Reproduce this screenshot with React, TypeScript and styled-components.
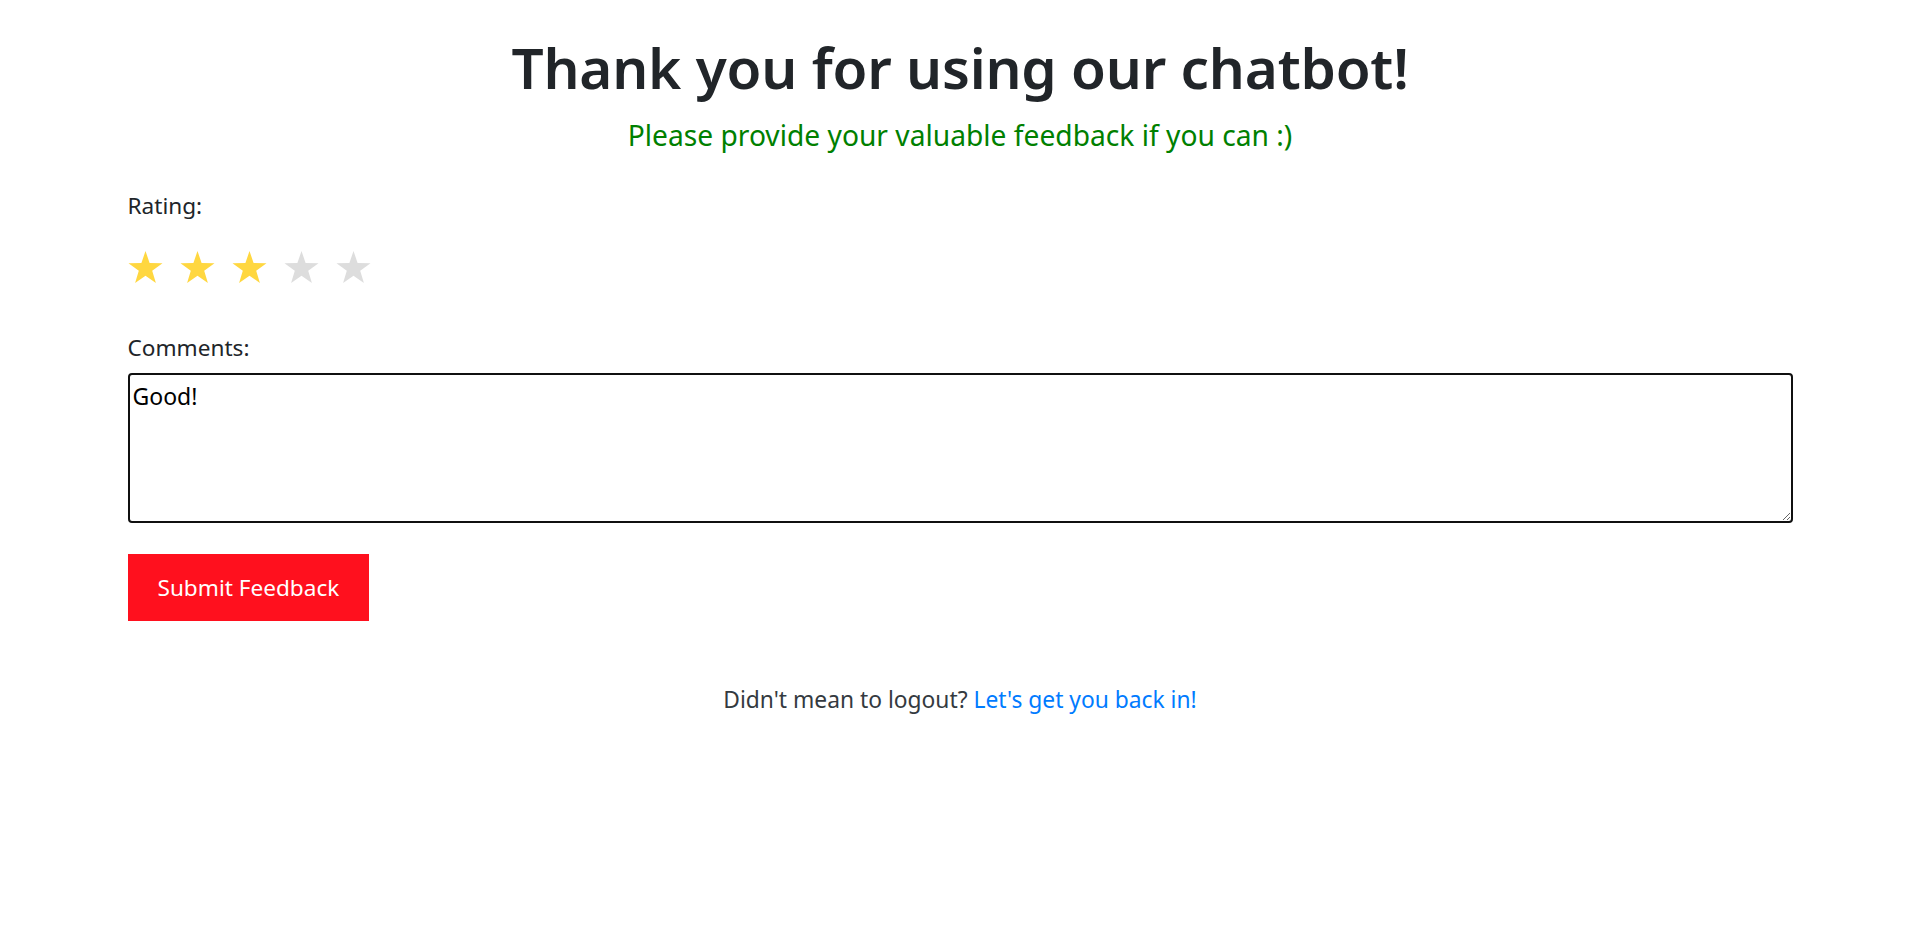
import React, { useEffect, useRef } from "react";
import styled, { createGlobalStyle } from "styled-components";

const GlobalStyle = createGlobalStyle`
  html, body {
    margin: 0;
    padding: 0;
    background: #ffffff;
  }
  body {
    font-family: "Noto Sans", "Open Sans", sans-serif;
    color: #212529;
  }
`;

const Page = styled.main`
  max-width: 1665px;
  margin: 0 auto;
  padding-top: 32px;
`;

const Header = styled.header`
  text-align: center;
`;

const Title = styled.h1`
  margin: 0;
  font-size: 56.6px;
  line-height: 70px;
  font-weight: 600;
  letter-spacing: -0.2px;
  color: #212529;
`;

const Subtitle = styled.p`
  margin: 14px 0 0;
  font-size: 28.2px;
  line-height: 38px;
  color: #008000;
`;

const Form = styled.form`
  display: flex;
  flex-direction: column;
  align-items: flex-start;
`;

const Label = styled.label<{ $top: number }>`
  display: block;
  margin-top: ${(p) => p.$top}px;
  font-size: 22.6px;
  line-height: 36px;
  color: #212529;
`;

const Stars = styled.div`
  display: flex;
  gap: 17px;
  margin-top: 27px;
  height: 32px;
`;

const StarButton = styled.span<{ $on: boolean }>`
  display: block;
  width: 35px;
  height: 32px;
  color: ${(p) => (p.$on ? "#ffd740" : "#dddddd")};
  cursor: pointer;
`;

const Comments = styled.textarea`
  box-sizing: border-box;
  width: 100%;
  height: 150px;
  margin-top: 7px;
  padding: 6px 3px;
  border: 2px solid #101010;
  border-radius: 4px;
  outline: none;
  font-family: "Noto Sans", "Open Sans", sans-serif;
  font-size: 23px;
  line-height: 30px;
  color: #000000;
  resize: both;
`;

const SubmitButton = styled.button`
  margin-top: 31px;
  height: 67px;
  padding: 0 30px;
  border: none;
  border-radius: 0;
  background: #ff101e;
  color: #ffffff;
  font-family: "Noto Sans", "Open Sans", sans-serif;
  font-size: 22.6px;
  cursor: pointer;
`;

const Footer = styled.p`
  margin: 61px 0 0;
  text-align: center;
  font-size: 22.8px;
  line-height: 36px;
  color: #343a40;
`;

const Link = styled.a`
  color: #007bff;
  text-decoration: none;
`;

const Star = () => (
  <svg width="35" height="32" viewBox="0 0 35 32" aria-hidden="true">
    <polygon
      fill="currentColor"
      points="17.5,0 21.6,12 34.5,12.2 24.2,19.8 27.9,32 17.5,24.7 7.1,32 10.8,19.8 0.5,12.2 13.4,12"
    />
  </svg>
);

export default function App() {
  const ref = useRef<HTMLTextAreaElement>(null);
  const rating = 3;

  useEffect(() => {
    const el = ref.current;
    if (el) {
      el.focus();
      el.setSelectionRange(el.value.length, el.value.length);
    }
  }, []);

  return (
    <>
      <GlobalStyle />
      <Page>
        <Header>
          <Title>Thank you for using our chatbot!</Title>
          <Subtitle>Please provide your valuable feedback if you can :)</Subtitle>
        </Header>
        <Form onSubmit={(e) => e.preventDefault()}>
          <Label $top={34}>Rating:</Label>
          <Stars>
            {[1, 2, 3, 4, 5].map((n) => (
              <StarButton key={n} $on={n <= rating}>
                <Star />
              </StarButton>
            ))}
          </Stars>
          <Label $top={47} htmlFor="comments">
            Comments:
          </Label>
          <Comments id="comments" ref={ref} defaultValue="Good!" />
          <SubmitButton type="submit">Submit Feedback</SubmitButton>
        </Form>
        <Footer>
          Didn't mean to logout? <Link href="#">Let's get you back in!</Link>
        </Footer>
      </Page>
    </>
  );
}
